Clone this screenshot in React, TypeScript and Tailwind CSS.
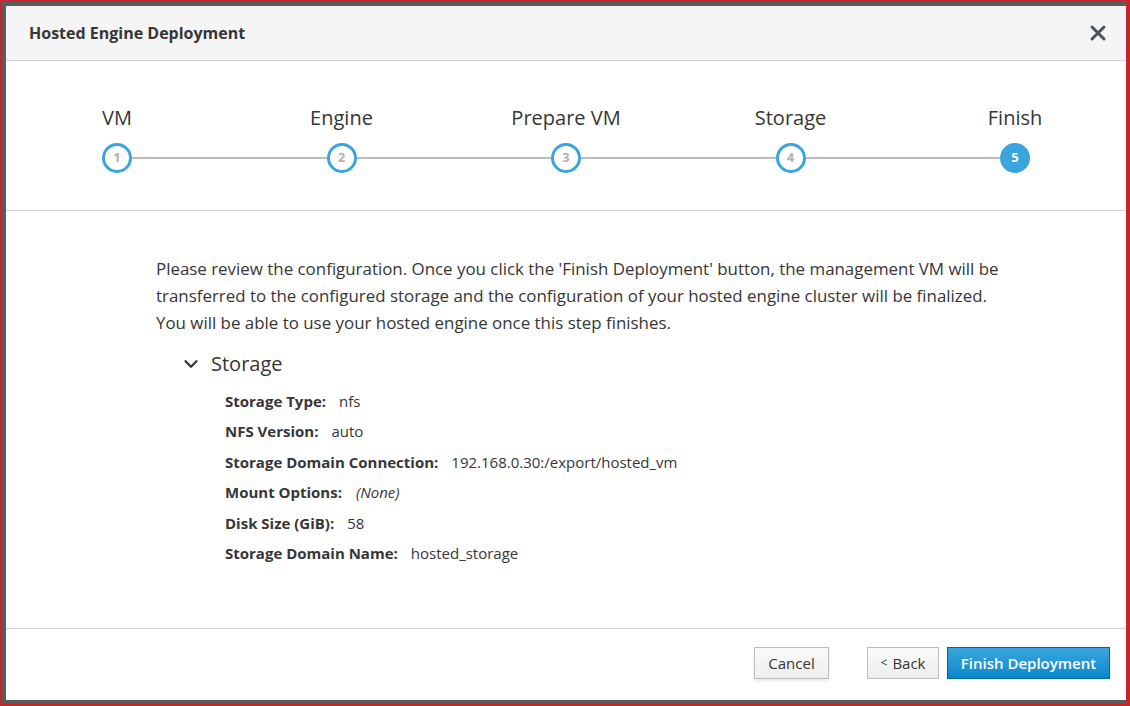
import { ChevronDown, X } from 'lucide-react'

const steps = ['VM', 'Engine', 'Prepare VM', 'Storage', 'Finish']

const rows: { label: string; value: string; italic?: boolean }[] = [
  { label: 'Storage Type:', value: 'nfs' },
  { label: 'NFS Version:', value: 'auto' },
  { label: 'Storage Domain Connection:', value: '192.168.0.30:/export/hosted_vm' },
  { label: 'Mount Options:', value: '(None)', italic: true },
  { label: 'Disk Size (GiB):', value: '58' },
  { label: 'Storage Domain Name:', value: 'hosted_storage' },
]

export default function App() {
  const active = 4

  return (
    <div
      className="w-[1130px] h-[706px] border-solid border-[#c4262e] border-t-[1px] border-l-[2px] border-b-[3px] border-r-[4px] bg-white"
      style={{ fontFamily: '"Open Sans", "Noto Sans", sans-serif' }}
    >
      <div className="h-full flex flex-col border-solid border-[#5b5b5b] border-t-[5px] border-l-[4px] border-b-[3px]">
        {/* header */}
        <div className="h-[55px] shrink-0 bg-[#f5f5f5] border-b border-[#d1d1d1] flex items-center justify-between pl-[23px] pr-[16px]">
          <h1 className="text-[16px] font-bold text-[#363636]">Hosted Engine Deployment</h1>
          <X className="w-[24px] h-[24px] text-[#4d5258]" strokeWidth={3} />
        </div>

        {/* wizard steps */}
        <div className="shrink-0 flex items-end px-[96px] pt-[43px] pb-[37px] border-b border-[#d1d1d1]">
          {steps.map((s, i) => (
            <div key={s} className={i < steps.length - 1 ? 'flex items-end flex-1' : 'flex items-end'}>
              <div className="flex flex-col items-center w-[30px]">
                <span className="whitespace-nowrap text-[20px] leading-[27px] text-[#363636] mb-[12px]">{s}</span>
                {i === active ? (
                  <div className="w-[30px] h-[30px] rounded-full bg-[#39a5dc] flex items-center justify-center text-[13px] font-bold text-white">
                    {i + 1}
                  </div>
                ) : (
                  <div className="w-[30px] h-[30px] rounded-full border-[3px] border-[#39a5dc] bg-white flex items-center justify-center text-[13px] font-bold text-[#b0b0b0]">
                    {i + 1}
                  </div>
                )}
              </div>
              {i < steps.length - 1 && <div className="flex-1 h-[2px] bg-[#bbbbbb] mb-[14px]" />}
            </div>
          ))}
        </div>

        {/* body */}
        <div className="flex-1 pl-[150px] pt-[44px]">
          <p className="w-[860px] text-[16.9px] leading-[27px] text-[#363636]">
            Please review the configuration. Once you click the 'Finish Deployment' button, the management VM will be
            transferred to the configured storage and the configuration of your hosted engine cluster will be finalized.
            You will be able to use your hosted engine once this step finishes.
          </p>

          <div className="flex items-center mt-[14px] ml-[24px] h-[27px]">
            <ChevronDown className="w-[22px] h-[22px] text-[#363636]" strokeWidth={2.5} />
            <span className="ml-[9px] text-[20px] text-[#363636]">Storage</span>
          </div>

          <dl className="ml-[69px] mt-[14px] flex flex-col gap-[10.4px]">
            {rows.map((r) => (
              <div key={r.label} className="flex items-center leading-[20px] text-[15px] text-[#363636]">
                <dt className="font-bold">{r.label}</dt>
                <dd className={r.italic ? 'ml-[14px] italic' : 'ml-[13px]'}>{r.value}</dd>
              </div>
            ))}
          </dl>
        </div>

        {/* footer */}
        <div className="h-[72px] shrink-0 border-t border-[#d1d1d1] flex items-start justify-end pt-[18px] pr-[16px]">
          <button className="h-[32px] w-[75px] border border-[#bbbbbb] bg-gradient-to-b from-[#fafafa] to-[#ededed] text-[15px] text-[#363636] shadow-[0_2px_3px_rgba(3,3,3,0.1)]">
            Cancel
          </button>
          <button className="ml-[38px] h-[32px] w-[72px] border border-[#bbbbbb] bg-gradient-to-b from-[#fafafa] to-[#ededed] text-[15px] text-[#363636] flex items-center justify-center gap-[5px]">
            <span className="text-[12px]">&lt;</span>Back
          </button>
          <button className="ml-[8px] h-[32px] w-[163px] border border-[#00659c] bg-gradient-to-b from-[#39a5dc] to-[#0088ce] text-[15px] font-semibold text-white">
            Finish Deployment
          </button>
        </div>
      </div>
    </div>
  )
}
